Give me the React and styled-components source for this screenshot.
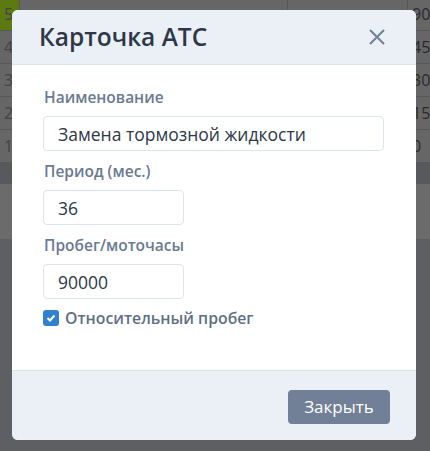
import React, { useState } from 'react';
import styled, { createGlobalStyle } from 'styled-components';

const GlobalStyle = createGlobalStyle`
  html, body {
    margin: 0;
    padding: 0;
    background: #bcbec6;
    font-family: "Open Sans", "Noto Sans", sans-serif;
  }
  * {
    box-sizing: border-box;
  }
`;

const Page = styled.div`
  width: 430px;
  height: 451px;
  overflow: hidden;
  position: relative;
  background: #bcbec6;
`;

const Table = styled.div`
  margin-top: -2px;
  display: flex;
  flex-direction: column;
`;

const Row = styled.div`
  display: grid;
  grid-template-columns: 20px 268px 120px 1fr;
  height: 33px;
  background: #cccccc;
  border-bottom: 1px solid #aeaeae;
`;

const Cell = styled.div`
  display: flex;
  align-items: center;
  padding-left: ${(p) => (p.num ? '4px' : '10px')};
  font-size: 16px;
  color: ${(p) => (p.dark ? '#555' : '#888')};
  background: ${(p) => (p.active ? '#bbf420' : 'transparent')};
  border-right: 1px solid #aeaeae;
  &:last-child {
    border-right: 0;
  }
`;

const TableFooter = styled.div`
  height: 21px;
  background: #b0b2ba;
`;

const Panel = styled.div`
  height: 55px;
  background: #d6d6d6;
`;

const Overlay = styled.div`
  position: absolute;
  inset: 0;
  background: rgba(0, 0, 0, 0.5);
`;

const Modal = styled.div`
  position: absolute;
  top: 10px;
  left: 12px;
  width: 404px;
  height: 430px;
  background: #fff;
  border-radius: 6px;
  overflow: hidden;
  display: flex;
  flex-direction: column;
`;

const Header = styled.header`
  height: 55px;
  flex-shrink: 0;
  display: flex;
  align-items: center;
  justify-content: space-between;
  padding: 0 30px 0 27px;
  background: #ebf0f7;
  border-bottom: 1px solid #d8e1ec;
`;

const Title = styled.h3`
  margin: 0;
  font-size: 24.5px;
  font-weight: 600;
  color: #2d3748;
  line-height: 1;
`;

const CloseButton = styled.button`
  border: 0;
  background: none;
  padding: 0;
  width: 18px;
  height: 18px;
  display: flex;
  align-items: center;
  justify-content: center;
  cursor: pointer;
`;

const Body = styled.div`
  flex: 1;
  padding: 22px 31px 0 32px;
  display: flex;
  flex-direction: column;
  gap: 10px;
`;

const Field = styled.div`
  display: flex;
  flex-direction: column;
  gap: 9px;
`;

const Label = styled.label`
  font-size: 15.5px;
  font-weight: 600;
  line-height: 20px;
  color: #6a7a90;
`;

const Input = styled.input`
  width: ${(p) => (p.narrow ? '141px' : '100%')};
  height: 35px;
  margin-left: -1px;
  padding: 0 14px;
  font-family: inherit;
  font-size: 17.5px;
  color: #2d3748;
  background: #fff;
  border: 1px solid #dde4ee;
  border-radius: 4px;
  outline: none;
`;

const CheckRow = styled.label`
  display: flex;
  align-items: center;
  gap: 6px;
  height: 20px;
  margin-top: -1px;
  font-size: 15.8px;
  font-weight: 600;
  color: #5f6f86;
`;

const Box = styled.span`
  width: 16px;
  height: 16px;
  margin-left: -1px;
  border-radius: 3px;
  background: #3182ce;
  display: flex;
  align-items: center;
  justify-content: center;
`;

const Footer = styled.footer`
  height: 70px;
  flex-shrink: 0;
  display: flex;
  align-items: center;
  justify-content: flex-end;
  padding: 2px 26px 0 0;
  background: #ebf0f7;
  border-top: 1px solid #d8e1ec;
`;

const Button = styled.button`
  height: 34px;
  width: 102px;
  border: 0;
  border-radius: 4px;
  background: #718096;
  color: #fff;
  font-family: inherit;
  font-size: 17px;
  font-weight: 500;
  cursor: pointer;
`;

const rows = [
  ['5', '90'],
  ['4', '45'],
  ['3', '30'],
  ['2', '15'],
  ['1', '0'],
];

export default function App() {
  const [name, setName] = useState('Замена тормозной жидкости');
  const [period, setPeriod] = useState('36');
  const [mileage, setMileage] = useState('90000');

  return (
    <Page>
      <GlobalStyle />
      <Table>
        {rows.map(([n, v], i) => (
          <Row key={n}>
            <Cell num active={i === 0}>{n}</Cell>
            <Cell />
            <Cell />
            <Cell num dark>{v}</Cell>
          </Row>
        ))}
      </Table>
      <TableFooter />
      <Panel />

      <Overlay />
      <Modal>
        <Header>
          <Title>Карточка АТС</Title>
          <CloseButton aria-label="Закрыть">
            <svg width="16" height="16" viewBox="0 0 16 16">
              <path d="M1 1L15 15M15 1L1 15" stroke="#718096" strokeWidth="2" fill="none" />
            </svg>
          </CloseButton>
        </Header>
        <Body>
          <Field>
            <Label>Наименование</Label>
            <Input value={name} onChange={(e) => setName(e.target.value)} />
          </Field>
          <Field>
            <Label>Период (мес.)</Label>
            <Input narrow value={period} onChange={(e) => setPeriod(e.target.value)} />
          </Field>
          <Field>
            <Label>Пробег/моточасы</Label>
            <Input narrow value={mileage} onChange={(e) => setMileage(e.target.value)} />
          </Field>
          <CheckRow>
            <Box>
              <svg width="10" height="8" viewBox="0 0 10 8">
                <path d="M1.5 4L4 6.5L8.5 1.5" stroke="#fff" strokeWidth="2" fill="none" />
              </svg>
            </Box>
            Относительный пробег
          </CheckRow>
        </Body>
        <Footer>
          <Button>Закрыть</Button>
        </Footer>
      </Modal>
    </Page>
  );
}
